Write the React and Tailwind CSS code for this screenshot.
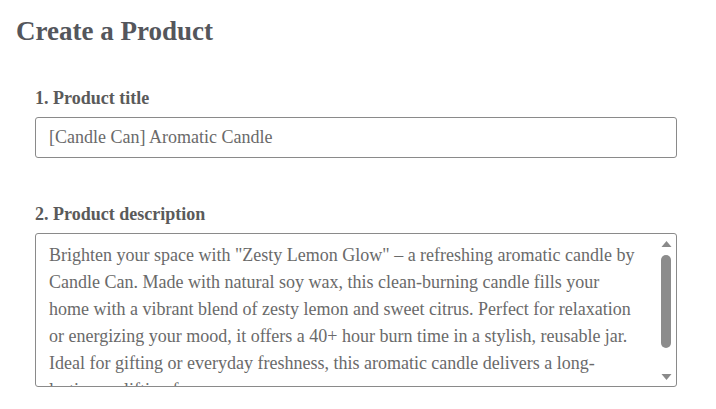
import React from "react";

export default function App() {
  const desc =
    'Brighten your space with "Zesty Lemon Glow" – a refreshing aromatic candle by Candle Can. Made with natural soy wax, this clean-burning candle fills your home with a vibrant blend of zesty lemon and sweet citrus. Perfect for relaxation or energizing your mood, it offers a 40+ hour burn time in a stylish, reusable jar. Ideal for gifting or everyday freshness, this aromatic candle delivers a long-lasting, uplifting fragrance.';
  return (
    <div
      className="w-[716px] h-[409px] bg-white overflow-hidden text-[#5b5b5b]"
      style={{ fontFamily: '"Liberation Serif", "Times New Roman", serif' }}
    >
      <div className="pl-4 pt-[14px]">
        <h1 className="text-[27px] leading-[34px] font-bold text-[#54565c]">Create a Product</h1>
      </div>
      <div className="pl-[35px] pr-[39px] pt-[40px]">
        <div className="text-[18px] leading-[20px] font-bold text-[#5a5a5a]">1. Product title</div>
        <div className="mt-[9px] h-[41px] border border-[#8a8a8a] rounded-[3px] flex items-center pl-[13px] text-[18px] text-[#6a6a6a]">
          [Candle Can] Aromatic Candle
        </div>
        <div className="mt-[46px] text-[18px] leading-[20px] font-bold text-[#5a5a5a]">2. Product description</div>
        <div className="mt-[9px] h-[154px] border border-[#8a8a8a] rounded-[3px] flex overflow-hidden">
          <div className="flex-1 pl-[13px] pr-[20px] pt-[8px] text-[18px] leading-[27px] text-[#6a6a6a]">
            {desc}
          </div>
          <div className="w-[16px] flex flex-col items-center py-[3px] mr-[2px]">
            <svg width="11" height="8" viewBox="0 0 11 8" className="mt-[3px]">
              <path d="M5.5 1 L10.5 7 L0.5 7 Z" fill="#8a8a8a" />
            </svg>
            <div className="mt-[7px] w-[10px] h-[93px] rounded-full bg-[#8c8c8c]" />
            <div className="flex-1" />
            <svg width="11" height="8" viewBox="0 0 11 8" className="mb-[2px]">
              <path d="M0.5 1 L10.5 1 L5.5 7 Z" fill="#8a8a8a" />
            </svg>
          </div>
        </div>
      </div>
    </div>
  );
}
